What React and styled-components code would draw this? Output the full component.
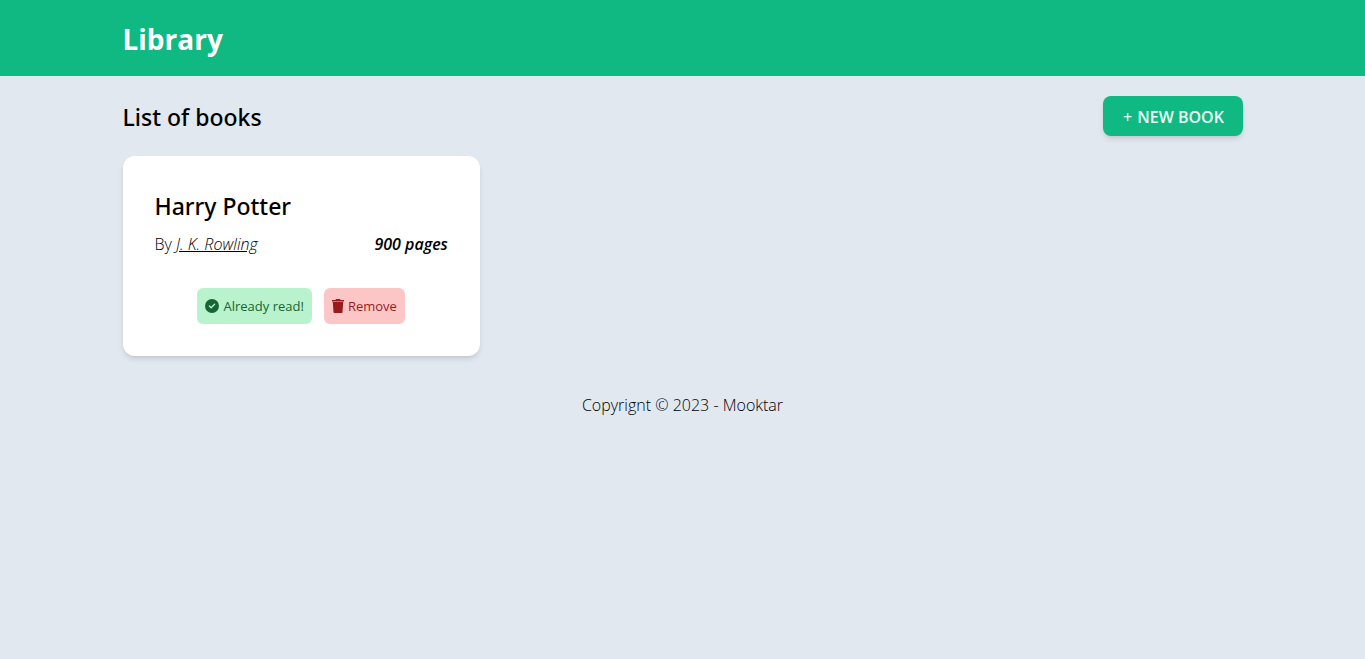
import React from "react";
import styled, { createGlobalStyle } from "styled-components";
import { FaCircleCheck } from "react-icons/fa6";

const GlobalStyle = createGlobalStyle`
  *, *::before, *::after { box-sizing: border-box; }
  body {
    margin: 0;
    background: #e2e8f0;
    color: #000;
    font-family: "Segoe UI", "Open Sans", "Noto Sans", sans-serif;
    font-size: 16px;
    font-weight: 300;
    line-height: 24px;
  }
  h1, h2, h3, p { margin: 0; }
`;

const Container = styled.div`
  max-width: 1280px;
  margin: 0 auto;
  padding: 0 80px;
`;

const Header = styled.header`
  background: #10b981;
  color: #fff;
  padding: 20px 0 18px;
`;

const Brand = styled.h1`
  font-size: 28px;
  line-height: 38px;
  font-weight: 700;
`;

const Toolbar = styled.div`
  display: flex;
  align-items: center;
  justify-content: space-between;
  padding: 20px 0;
`;

const Title = styled.h2`
  padding-top: 2px;
  font-family: "Segoe UI", "Noto Sans", "Open Sans", sans-serif;
  font-size: 23px;
  line-height: 32px;
  font-weight: 500;
`;

const NewBookButton = styled.button`
  display: flex;
  align-items: center;
  justify-content: center;
  gap: 5px;
  min-width: 140px;
  height: 40px;
  padding: 2px 0 0 2px;
  border: 0;
  border-radius: 8px;
  background: #10b981;
  color: #ecfdf5;
  font: inherit;
  font-weight: 600;
  text-transform: uppercase;
  box-shadow: 0 4px 6px -1px rgb(0 0 0 / 0.1), 0 2px 4px -2px rgb(0 0 0 / 0.1);
`;

const Plus = styled.span`
  font-weight: 400;
`;

const Grid = styled.main`
  display: grid;
  grid-template-columns: repeat(3, 1fr);
  gap: 24px;
`;

const Card = styled.article`
  padding: 32px;
  border-radius: 12px;
  background: #fff;
  box-shadow: 0 4px 6px -1px rgb(0 0 0 / 0.1), 0 2px 4px -2px rgb(0 0 0 / 0.1);
`;

const Meta = styled.div`
  display: flex;
  justify-content: space-between;
  padding-top: 10px;
`;

const Author = styled.span`
  font-style: italic;
  text-decoration: underline;
`;

const Pages = styled.span`
  font-style: italic;
  font-weight: 600;
`;

const Actions = styled.div`
  display: flex;
  justify-content: center;
  gap: 12px;
  margin-top: 32px;
`;

const tones = {
  green: { background: "#b8f3cd", color: "#166534" },
  red: { background: "#fdc6c6", color: "#991b1b" },
};

const ActionButton = styled.button`
  display: flex;
  align-items: center;
  gap: 4px;
  height: 36px;
  padding: 0 8px;
  border: 0;
  border-radius: 6px;
  background: ${({ $tone }) => tones[$tone].background};
  color: ${({ $tone }) => tones[$tone].color};
  font: inherit;
  font-size: 13px;
  font-weight: 400;
`;

const Footer = styled.footer`
  padding: 37px 0;
  text-align: center;
`;

const TrashIcon = () => (
  <svg width="12" height="14" viewBox="0 0 12 14" fill="currentColor" aria-hidden="true">
    <path d="M4 0h4l.6 1H12v1.500H0V1h3.400zM.8 3h10.400l-.7 10.200a.8.8 0 0 1-.8.8H2.300a.8.8 0 0 1-.8-.8z" />
  </svg>
);

export default function App() {
  return (
    <>
      <GlobalStyle />
      <Header>
        <Container>
          <Brand>Library</Brand>
        </Container>
      </Header>
      <Container>
        <Toolbar>
          <Title>List of books</Title>
          <NewBookButton type="button"><Plus>+</Plus> New book</NewBookButton>
        </Toolbar>
        <Grid>
          <Card>
            <Title as="h3">Harry Potter</Title>
            <Meta>
              <span>By <Author>J. K. Rowling</Author></span>
              <Pages>900 pages</Pages>
            </Meta>
            <Actions>
              <ActionButton type="button" $tone="green">
                <FaCircleCheck size={14} /> Already read!
              </ActionButton>
              <ActionButton type="button" $tone="red">
                <TrashIcon /> Remove
              </ActionButton>
            </Actions>
          </Card>
        </Grid>
        <Footer>Copyrignt © 2023 - Mooktar</Footer>
      </Container>
    </>
  );
}
